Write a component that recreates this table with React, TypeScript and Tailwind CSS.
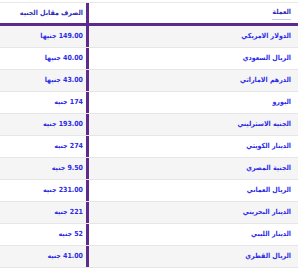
const rates = [
  { name: "الدولار الامريكي", value: "149.00 جنيها" },
  { name: "الريال السعودي", value: "40.00 جنيها" },
  { name: "الدرهم الاماراتي", value: "43.00 جنيها" },
  { name: "اليورو", value: "174 جنيه" },
  { name: "الجنيه الاسترليني", value: "193.00 جنيه" },
  { name: "الدينار الكويتي", value: "274 جنيه" },
  { name: "الجنية المصري", value: "9.50 جنيه" },
  { name: "الريال العماني", value: "231.00 جنيه" },
  { name: "الدينار البحريني", value: "221 جنيه" },
  { name: "الدينار الليبي", value: "52 جنيه" },
  { name: "الريال القطري", value: "41.00 جنيه" },
];

export default function App() {
  return (
    <div className="w-[300px] h-[271px] bg-white overflow-hidden pt-[2px]">
      <div
        dir="rtl"
        className="w-[298px] border-t border-[#e8e8e8] font-['DejaVu_Sans_Condensed','DejaVu_Sans',sans-serif] font-bold text-[7px] text-[#2a2ae6]"
      >
        <div className="flex h-[23px] border-b-[3px] border-[#5f2a8c]">
          <div className="w-[212px] border-l-[3px] border-[#5f2a8c] flex items-center pr-[7px]">
            <span className="text-[#2b2bb8] border-b border-[#c8c8ee] leading-[13px]">العملة</span>
          </div>
          <div className="flex-1 flex items-center pr-[3px] text-[#2b2bb8]">الصرف مقابل الجنيه</div>
        </div>
        {rates.map((r, i) => (
          <div
            key={r.name}
            className={`flex h-[22px] border-b border-[#e6e6e6] ${i % 2 === 0 ? "bg-[#f5f5f5]" : "bg-white"}`}
          >
            <div className="w-[212px] border-l-[3px] border-[#5f2a8c] flex items-center pr-[7px]">{r.name}</div>
            <div className="flex-1 flex items-center pr-[3px]">{r.value}</div>
          </div>
        ))}
      </div>
    </div>
  );
}
